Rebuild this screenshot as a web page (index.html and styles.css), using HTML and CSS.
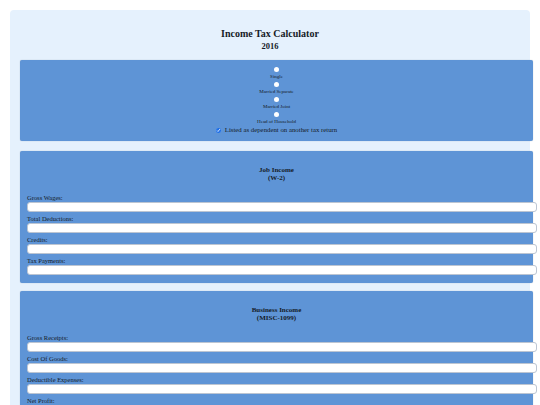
FILE: index.html
```html
<!DOCTYPE html>
<html lang="en">
<head>
<meta charset="utf-8">
<title>Income Tax Calculator</title>
<link rel="stylesheet" href="styles.css">
</head>
<body>
<div class="page">
  <main class="calc">
    <header class="calc-head">
      <h1 class="calc-title">Income Tax Calculator</h1>
      <h2 class="calc-year">2016</h2>
    </header>

    <section class="panel status">
      <div class="status-opt"><input type="radio" name="status" id="st-single" class="radio"><label for="st-single">Single</label></div>
      <div class="status-opt"><input type="radio" name="status" id="st-msep" class="radio"><label for="st-msep">Married Separate</label></div>
      <div class="status-opt"><input type="radio" name="status" id="st-mjoint" class="radio"><label for="st-mjoint">Married Joint</label></div>
      <div class="status-opt"><input type="radio" name="status" id="st-head" class="radio"><label for="st-head">Head of Household</label></div>
      <div class="dep"><input type="checkbox" id="dep" class="check" checked><label for="dep">Listed as dependent on another tax return</label></div>
    </section>

    <section class="panel income job">
      <h3 class="panel-title">Job Income<br>(W-2)</h3>
      <div class="fields">
        <div class="field"><label for="w-gross">Gross Wages:</label><input type="text" id="w-gross" class="num"></div>
        <div class="field"><label for="w-ded">Total Deductions:</label><input type="text" id="w-ded" class="num"></div>
        <div class="field"><label for="w-cred">Credits:</label><input type="text" id="w-cred" class="num"></div>
        <div class="field"><label for="w-pay">Tax Payments:</label><input type="text" id="w-pay" class="num"></div>
      </div>
    </section>

    <section class="panel income business">
      <h3 class="panel-title">Business Income<br>(MISC-1099)</h3>
      <div class="fields">
        <div class="field"><label for="b-gross">Gross Receipts:</label><input type="text" id="b-gross" class="num"></div>
        <div class="field"><label for="b-cog">Cost Of Goods:</label><input type="text" id="b-cog" class="num"></div>
        <div class="field"><label for="b-exp">Deductible Expenses:</label><input type="text" id="b-exp" class="num"></div>
        <div class="field"><label for="b-net">Net Profit:</label><input type="text" id="b-net" class="num"></div>
      </div>
    </section>
  </main>
</div>
</body>
</html>
```

FILE: styles.css
```css
* { box-sizing: border-box; }

body {
  margin: 0;
  background: #ffffff;
  font-family: "Liberation Serif", "Times New Roman", serif;
  color: #151b27;
}

.page {
  padding: 10px;
}

.calc {
  width: 520px;
  background: #e5f1fd;
  border-radius: 4px;
  padding: 18px 0 12px;
}

.calc-head {
  text-align: center;
  margin-bottom: 8px;
}

.calc-title {
  margin: 0;
  font-size: 10px;
  line-height: 12px;
  font-weight: bold;
}

.calc-year {
  margin: 0;
  font-size: 8.5px;
  line-height: 12px;
  font-weight: bold;
}

.panel {
  margin-left: 10px;
  width: 513px;
  background: #5e94d6;
  border-radius: 2px;
  box-shadow: 0 0 1px rgba(20, 40, 80, 0.35);
}

.status {
  padding: 6px 0 7px;
  display: flex;
  flex-direction: column;
  align-items: center;
  text-align: center;
}

.status-opt {
  display: flex;
  flex-direction: column;
  align-items: center;
}

.radio {
  appearance: none;
  -webkit-appearance: none;
  display: block;
  width: 5px;
  height: 5px;
  margin: 1px 0;
  border-radius: 50%;
  background: #ffffff;
  border: none;
}

.status-opt label {
  display: block;
  font-size: 5px;
  line-height: 8px;
}

.dep {
  display: flex;
  align-items: center;
  font-size: 6.8px;
  line-height: 8px;
}

.check {
  width: 5px;
  height: 5px;
  margin: 0 4px 0 0;
  accent-color: #1f6fe6;
}

.job {
  margin-top: 10px;
}

.business {
  margin-top: 8px;
}

.income {
  padding: 15px 0 8px;
}

.panel-title {
  margin: 0 0 11px;
  font-size: 7px;
  line-height: 8px;
  font-weight: bold;
  text-align: center;
}

.fields {
  display: flex;
  flex-direction: column;
  gap: 2px;
  padding-left: 7px;
}

.field label {
  display: block;
  font-size: 6.5px;
  line-height: 9px;
}

.num {
  display: block;
  width: 510px;
  height: 10px;
  margin: 0;
  padding: 0 2px;
  background: #ffffff;
  border: 1px solid #bcc5d2;
  border-radius: 3px;
  font-size: 6.5px;
}
```
